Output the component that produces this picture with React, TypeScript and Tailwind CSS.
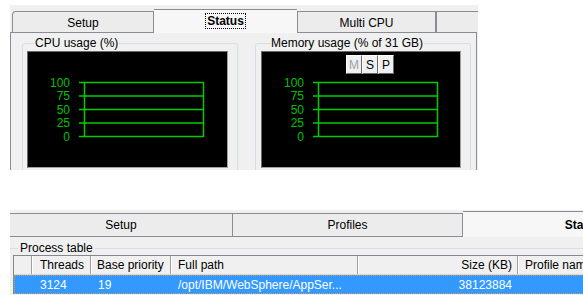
import React from 'react';

const ticks = [
  { v: '100', y: 30 },
  { v: '75', y: 43.5 },
  { v: '50', y: 57 },
  { v: '25', y: 70.5 },
  { v: '0', y: 84 },
];

function UsageChart() {
  return (
    <svg width="199" height="115" className="block">
      {ticks.map((t) => (
        <g key={t.v}>
          <text
            x="42"
            y={t.y + 4.5}
            textAnchor="end"
            fill="#00c000"
            fontSize="12"
            fontFamily="Liberation Sans, Arial, sans-serif"
          >
            {t.v}
          </text>
          <line x1="51" x2="175.5" y1={t.y + 0.5} y2={t.y + 0.5} stroke="#00cc00" strokeWidth="1.5" />
        </g>
      ))}
      <line x1="56.5" x2="56.5" y1="30" y2="85" stroke="#00cc00" strokeWidth="1.5" />
      <line x1="175.5" x2="175.5" y1="30" y2="85" stroke="#00cc00" strokeWidth="1.5" />
    </svg>
  );
}

function ChartButton({ label, disabled }: { label: string; disabled?: boolean }) {
  return (
    <div
      className={`w-[16px] h-[19px] flex items-center justify-center bg-[#f0f0f0] border border-t-white border-l-white border-r-[#696969] border-b-[#696969] ${
        disabled ? 'text-[#a0a0a0]' : 'text-black'
      }`}
    >
      {label}
    </div>
  );
}

export default function App() {
  return (
    <div className="w-[583px] h-[295px] overflow-hidden bg-white font-['Liberation_Sans',Arial,sans-serif] text-[12px] leading-[14px] text-black">
      {/* top: status tab page */}
      <div className="ml-[10px] mt-[5px] w-[468px] h-[165px] overflow-hidden bg-[#f0f0f0] flex flex-col">
        <div className="flex items-end h-[27px] pl-[2px] shrink-0">
          <div className="shrink-0 w-[142px] h-[21px] flex items-center justify-center pt-px border border-b-0 border-[#898c95] rounded-tl-[4px] bg-[#ececec]">
            Setup
          </div>
          <div className="shrink-0 relative z-10 -mb-px w-[143px] h-[24px] flex items-start justify-center pt-[4px] border-t border-[#898c95] bg-[#f7f7f7]">
            <span className="font-bold outline-1 outline-dotted outline-black px-[1px]">Status</span>
          </div>
          <div className="shrink-0 w-[139px] h-[21px] flex items-center justify-center pt-px border border-b-0 border-[#898c95] bg-[#ececec]">
            Multi CPU
          </div>
          <div className="flex-1 h-[21px] border-t border-l border-[#898c95] bg-[#ececec]" />
        </div>
        <div className="flex-1 flex gap-[17px] pl-[11px] pt-[3px] border-l border-r border-t border-[#898c95] bg-[#f0f0f0] mr-px">
          <fieldset className="shrink-0 w-[216px] border border-[#d5dfe5] rounded-[3px] px-[4px] pb-2">
            <legend className="ml-[7px] px-[1px] leading-[14px]">CPU usage (%)</legend>
            <div className="mt-px w-[201px] h-[117px] bg-black border border-t-[#696969] border-l-[#696969] border-r-[#a0a0a0] border-b-[#a0a0a0]">
              <UsageChart />
            </div>
          </fieldset>
          <fieldset className="shrink-0 w-[216px] border border-[#d5dfe5] rounded-[3px] pl-[5px] pr-[9px] pb-2">
            <legend className="ml-[9px] px-[1px] leading-[14px]">Memory usage (% of 31 GB)</legend>
            <div className="relative mt-px w-[200px] h-[117px] bg-black border border-t-[#696969] border-l-[#696969] border-r-[#a0a0a0] border-b-[#a0a0a0]">
              <UsageChart />
              <div className="absolute left-[84px] top-[3px] flex">
                <ChartButton label="M" disabled />
                <ChartButton label="S" />
                <ChartButton label="P" />
              </div>
            </div>
          </fieldset>
        </div>
      </div>

      {/* bottom: process table */}
      <div className="ml-[10px] mt-[40px] w-[573px] h-[85px] overflow-hidden bg-[#f0f0f0] flex flex-col">
        <div className="flex items-end h-[26px] shrink-0">
          <div className="shrink-0 w-[223px] h-[23px] flex items-center justify-center border border-b-0 border-l-0 border-[#898c95] bg-[#ececec]">
            Setup
          </div>
          <div className="shrink-0 w-[230px] h-[23px] flex items-center justify-center border border-b-0 border-l-0 border-[#898c95] bg-[#ececec]">
            Profiles
          </div>
          <div className="shrink-0 relative z-10 -mb-px w-[240px] h-[26px] flex items-center justify-center bg-[#f7f7f7] border-t border-[#898c95] font-bold">
            Status
          </div>
        </div>
        <div className="flex-1 border-t border-[#898c95] bg-[#f0f0f0] pt-[4px]">
          <fieldset className="border-t border-[#d5dfe5] pl-[3px]">
            <legend className="ml-[5px] px-[2px] leading-[14px]">Process table</legend>
            <div className="bg-white border-l border-t border-[#828790]">
              <div className="flex h-[19px] bg-[#f0f0f0] border-b border-[#d5d5d5]">
                <div className="shrink-0 w-[18px] overflow-hidden border-r border-[#a0a0a0] flex items-center">
                  <span className="-ml-[4px]">t</span>
                </div>
                <div className="shrink-0 w-[59px] pl-[7px] border-r border-l border-r-[#a0a0a0] border-l-white flex items-center">Threads</div>
                <div className="shrink-0 w-[80px] pl-[5px] border-r border-l border-r-[#a0a0a0] border-l-white flex items-center">Base priority</div>
                <div className="shrink-0 w-[187px] pl-[6px] border-r border-l border-r-[#a0a0a0] border-l-white flex items-center">Full path</div>
                <div className="shrink-0 w-[160px] pr-[5px] border-r border-l border-r-[#a0a0a0] border-l-white flex items-center justify-end">Size (KB)</div>
                <div className="flex-1 pl-[6px] border-l border-white flex items-center whitespace-nowrap overflow-hidden">Profile name</div>
              </div>
              <div className="flex h-[19px] bg-[#3399ff] text-white border border-dotted border-[#c8a060]">
                <div className="shrink-0 w-[17px]" />
                <div className="shrink-0 w-[59px] pl-[8px] flex items-center">3124</div>
                <div className="shrink-0 w-[80px] pl-[7px] flex items-center">19</div>
                <div className="shrink-0 w-[187px] pl-[7px] flex items-center whitespace-nowrap">/opt/IBM/WebSphere/AppSer...</div>
                <div className="shrink-0 w-[160px] pr-[6px] flex items-center justify-end">38123884</div>
                <div className="flex-1" />
              </div>
            </div>
          </fieldset>
        </div>
      </div>
    </div>
  );
}
